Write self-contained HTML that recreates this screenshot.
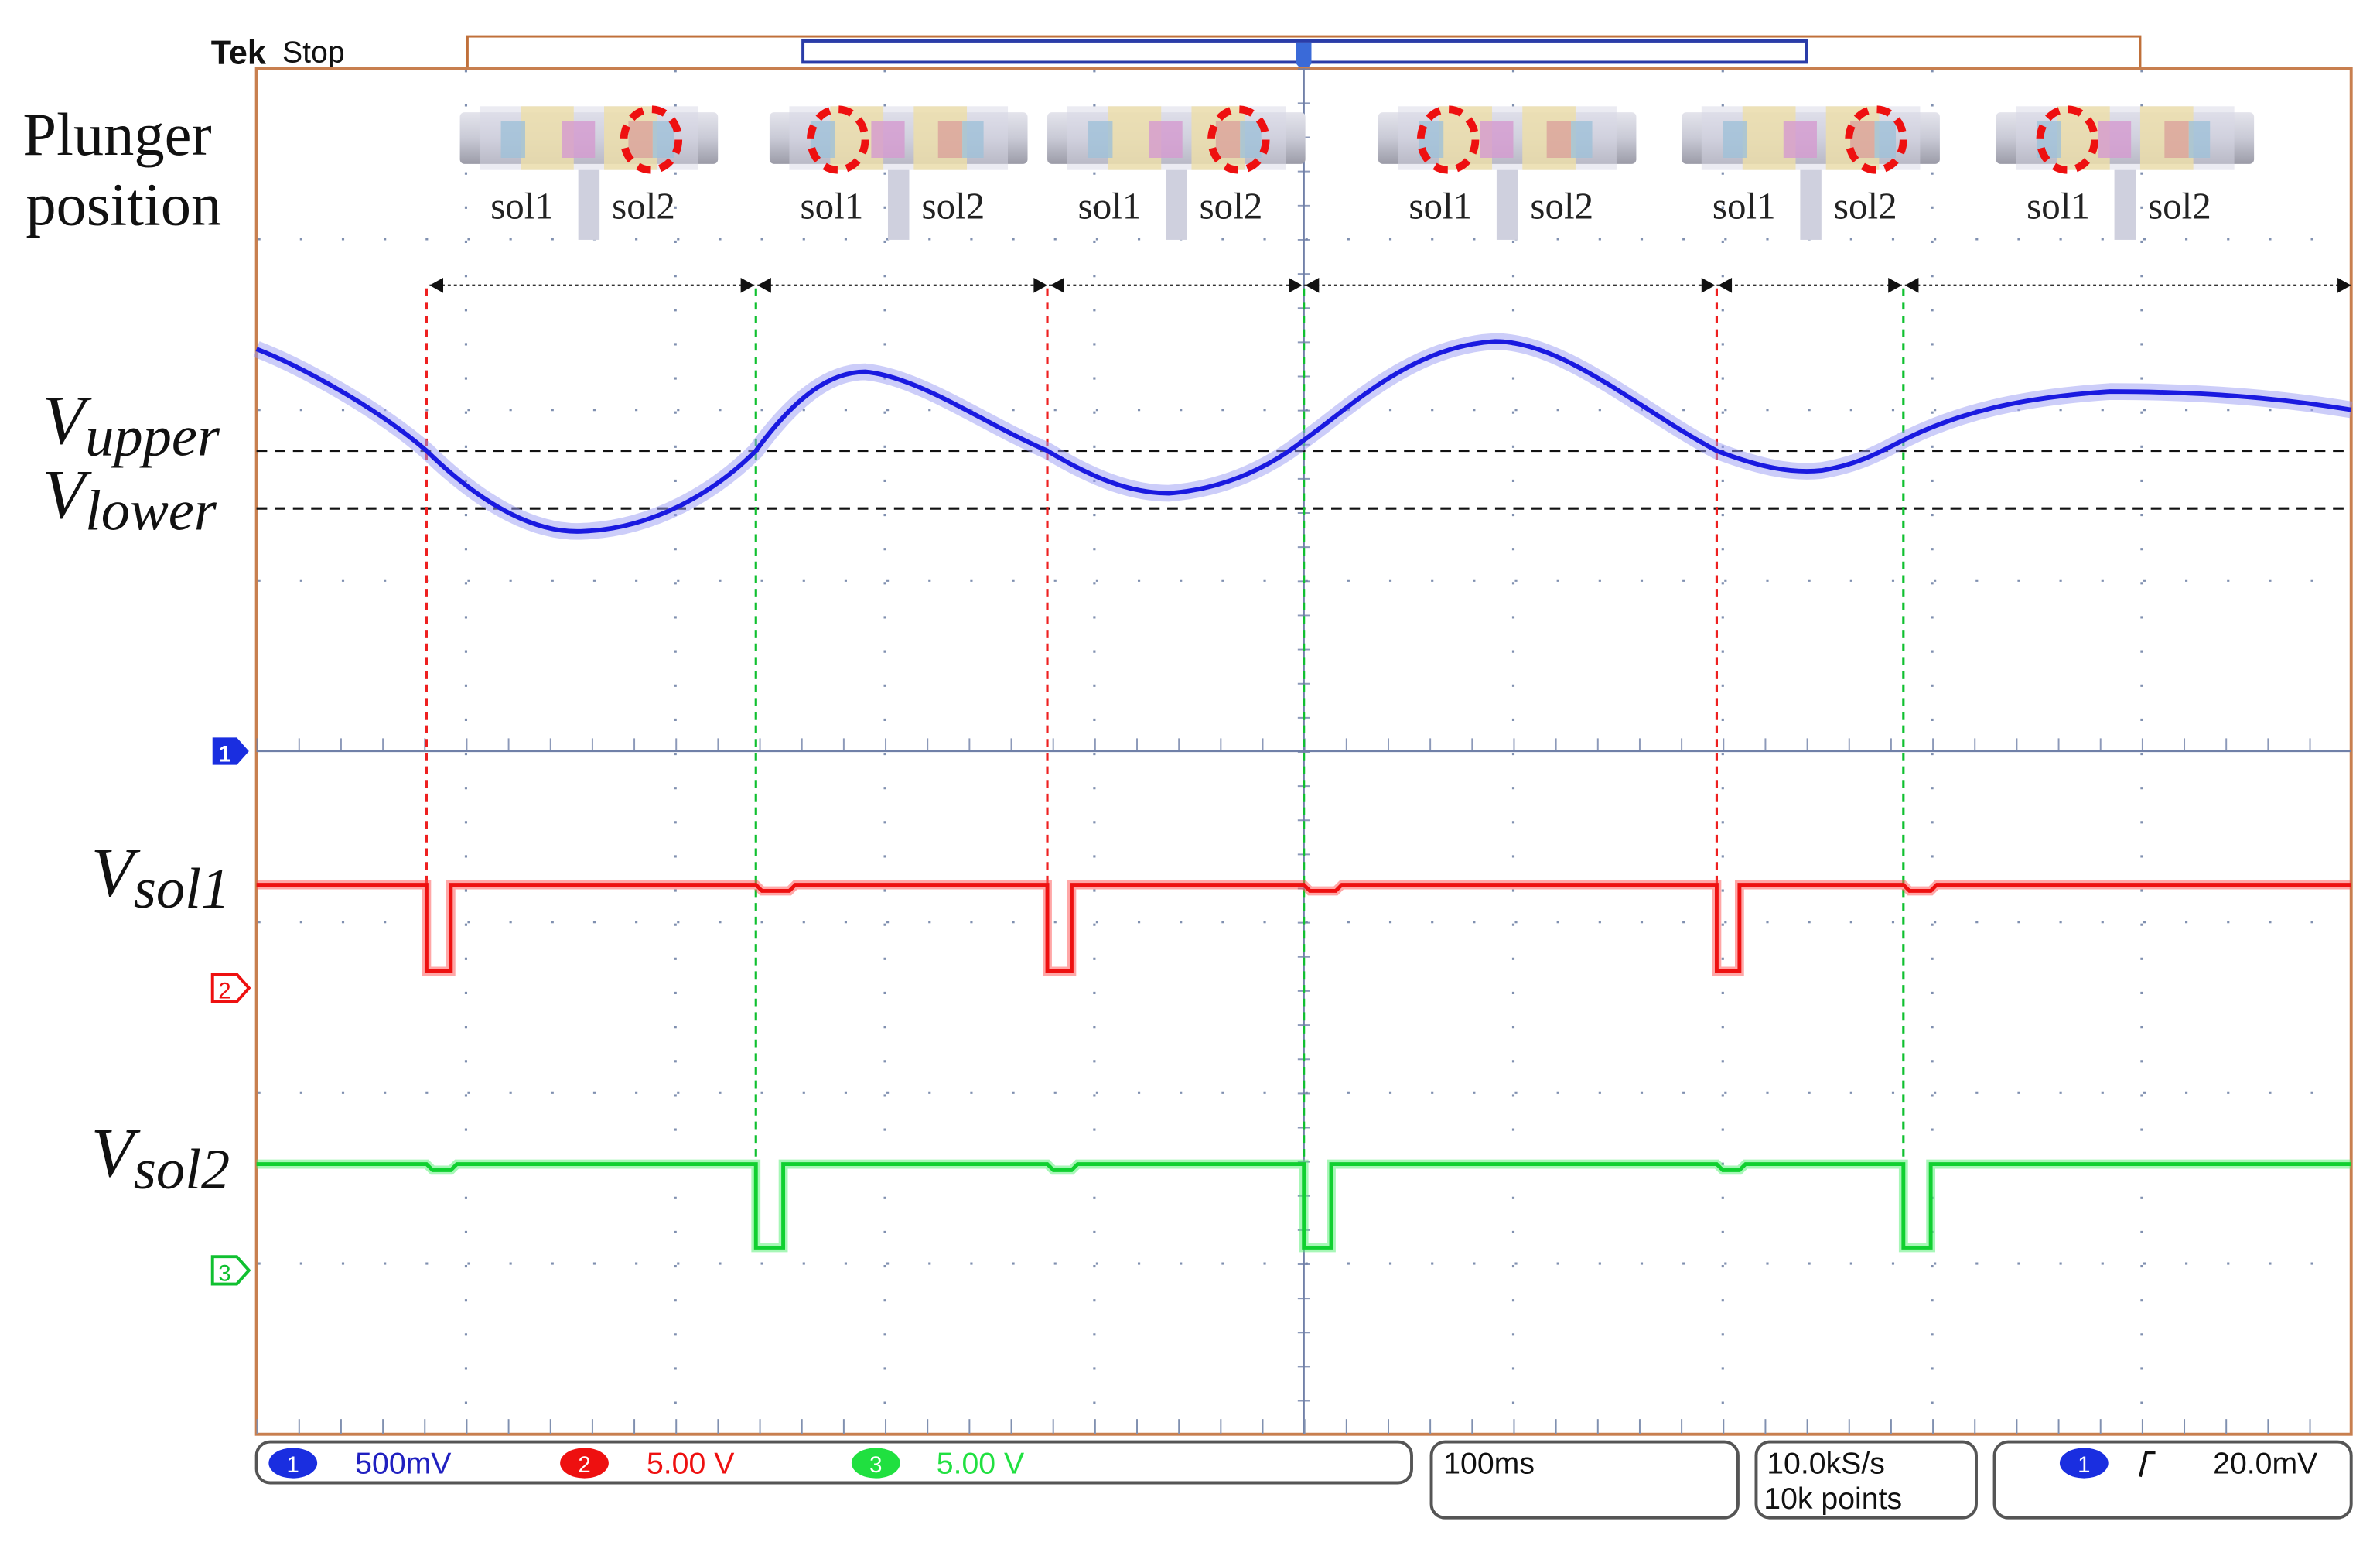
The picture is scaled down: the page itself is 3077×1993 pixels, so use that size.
<!DOCTYPE html>
<html><head><meta charset="utf-8"><style>
html,body{margin:0;padding:0;background:#fff}
svg{display:block}
</style></head><body>
<svg width="3077" height="1993" viewBox="0 0 1568 1016" preserveAspectRatio="none" xmlns="http://www.w3.org/2000/svg">
<defs>
<linearGradient id="cyl" x1="0" y1="0" x2="0" y2="1">
<stop offset="0" stop-color="#e4e4ec"/><stop offset="0.5" stop-color="#c9cad6"/><stop offset="1" stop-color="#9c9ca8"/>
</linearGradient>
<g id="sol">
<rect x="-85" y="-18" width="170" height="34" rx="3" fill="url(#cyl)"/>
<rect x="-72" y="-22" width="144" height="42" fill="#d8d8e6" opacity="0.5"/>
<rect x="-45" y="-22" width="35" height="42" fill="#eedfa8" opacity="0.8"/>
<rect x="10" y="-22" width="35" height="42" fill="#eedfa8" opacity="0.8"/>
<rect x="-58" y="-12" width="16" height="24" fill="#9fc0d8" opacity="0.8"/>
<rect x="-18" y="-12" width="22" height="24" fill="#d49ad0" opacity="0.8"/>
<rect x="26" y="-12" width="16" height="24" fill="#d89a98" opacity="0.7"/>
<rect x="42" y="-12" width="14" height="24" fill="#9fc0d8" opacity="0.8"/>
<rect x="-7" y="20" width="14" height="46" fill="#cfd0de"/>
<text x="-44" y="52" font-family="Liberation Serif, serif" font-size="25" fill="#222" text-anchor="middle">sol1</text>
<text x="36" y="52" font-family="Liberation Serif, serif" font-size="25" fill="#222" text-anchor="middle">sol2</text>
</g>
</defs>

<rect x="308" y="24" width="1102" height="21" fill="none" stroke="#c0703a" stroke-width="1.5"/>
<rect x="529" y="27" width="661" height="14" fill="none" stroke="#2a3ca8" stroke-width="2"/>
<path d="M854 28 h10 v14 l-5 6 l-5 -6 z" fill="#3a6ad8"/>
<text x="139" y="42" font-family="Liberation Sans, sans-serif" font-size="22" font-weight="bold" fill="#111">Tek</text>
<text x="186" y="41" font-family="Liberation Sans, sans-serif" font-size="20" fill="#111">Stop</text>

<rect x="169" y="45" width="1380" height="900" fill="#fff" stroke="#c87f4f" stroke-width="2"/>
<g stroke="#8090b0" stroke-width="1.6" stroke-dasharray="1.6 20.9">
<line x1="307" y1="46" x2="307" y2="944"/><line x1="445" y1="46" x2="445" y2="944"/>
<line x1="583" y1="46" x2="583" y2="944"/><line x1="721" y1="46" x2="721" y2="944"/>
<line x1="997" y1="46" x2="997" y2="944"/><line x1="1135" y1="46" x2="1135" y2="944"/>
<line x1="1273" y1="46" x2="1273" y2="944"/><line x1="1411" y1="46" x2="1411" y2="944"/>
</g>
<g stroke="#8090b0" stroke-width="1.6" stroke-dasharray="1.6 26">
<line x1="170" y1="157.5" x2="1548" y2="157.5"/><line x1="170" y1="270" x2="1548" y2="270"/>
<line x1="170" y1="382.5" x2="1548" y2="382.5"/><line x1="170" y1="607.5" x2="1548" y2="607.5"/>
<line x1="170" y1="720" x2="1548" y2="720"/><line x1="170" y1="832.5" x2="1548" y2="832.5"/>
</g>
<line x1="859" y1="45" x2="859" y2="945" stroke="#7080a8" stroke-width="1.2"/>
<line x1="169" y1="495" x2="1549" y2="495" stroke="#7080a8" stroke-width="1.2"/>
<line x1="169" y1="491" x2="1549" y2="491" stroke="#7080a8" stroke-width="9" stroke-dasharray="1 26.6" opacity="0.8"/>
<line x1="855" y1="45" x2="855" y2="945" stroke="#7080a8" stroke-width="8" stroke-dasharray="1 21.5" transform="translate(4 0)" opacity="0.8"/>
<line x1="169" y1="940" x2="1549" y2="940" stroke="#8090b0" stroke-width="10" stroke-dasharray="1 26.6"/>

<use href="#sol" x="388" y="92"/>
<use href="#sol" x="592" y="92"/>
<use href="#sol" x="775" y="92"/>
<use href="#sol" x="993" y="92"/>
<use href="#sol" x="1193" y="92"/>
<use href="#sol" x="1400" y="92"/>
<g fill="none" stroke="#ee1010" stroke-width="5" stroke-dasharray="9 6">
<ellipse cx="429" cy="92" rx="18" ry="20"/>
<ellipse cx="552" cy="92" rx="18" ry="20"/>
<ellipse cx="816" cy="92" rx="18" ry="20"/>
<ellipse cx="954" cy="92" rx="18" ry="20"/>
<ellipse cx="1236" cy="92" rx="18" ry="20"/>
<ellipse cx="1362" cy="92" rx="18" ry="20"/>
</g>

<g stroke="#333" stroke-width="1.2" stroke-dasharray="2 2" fill="none">
<line x1="283" y1="188" x2="1549" y2="188"/>
</g>
<g fill="#111">
<path d="M283 188 l9 -5 v10z"/><path d="M497 188 l-9 -5 v10z"/><path d="M499 188 l9 -5 v10z"/>
<path d="M690 188 l-9 -5 v10z"/><path d="M692 188 l9 -5 v10z"/><path d="M858 188 l-9 -5 v10z"/>
<path d="M860 188 l9 -5 v10z"/><path d="M1130 188 l-9 -5 v10z"/><path d="M1132 188 l9 -5 v10z"/>
<path d="M1253 188 l-9 -5 v10z"/><path d="M1255 188 l9 -5 v10z"/><path d="M1549 188 l-9 -5 v10z"/>
</g>

<g stroke="#111" stroke-width="1.6" stroke-dasharray="7 5">
<line x1="169" y1="297" x2="1549" y2="297"/><line x1="169" y1="335" x2="1549" y2="335"/>
</g>

<g stroke="#ee2020" stroke-width="1.6" stroke-dasharray="5 4">
<line x1="281" y1="190" x2="281" y2="640"/><line x1="690" y1="190" x2="690" y2="640"/><line x1="1131" y1="190" x2="1131" y2="640"/>
</g>
<g stroke="#10c030" stroke-width="1.6" stroke-dasharray="5 4">
<line x1="498" y1="190" x2="498" y2="822"/><line x1="859" y1="190" x2="859" y2="822"/><line x1="1254" y1="190" x2="1254" y2="822"/>
</g>

<path d="M169 230 C200 242 250 270 281 297 C320 335 355 352 385 350 C430 348 470 325 498 297 C525 260 548 245 570 245 C605 248 650 280 690 297 C720 315 745 325 770 325 C810 322 840 305 859 290 C890 268 930 228 985 225 C1030 225 1080 270 1131 297 C1160 308 1180 312 1200 310 C1225 306 1240 297 1254 290 C1290 272 1330 262 1390 258 C1450 258 1500 262 1549 270" fill="none" stroke="#9a9cf4" stroke-width="11" opacity="0.5"/>
<path d="M169 230 C200 242 250 270 281 297 C320 335 355 352 385 350 C430 348 470 325 498 297 C525 260 548 245 570 245 C605 248 650 280 690 297 C720 315 745 325 770 325 C810 322 840 305 859 290 C890 268 930 228 985 225 C1030 225 1080 270 1131 297 C1160 308 1180 312 1200 310 C1225 306 1240 297 1254 290 C1290 272 1330 262 1390 258 C1450 258 1500 262 1549 270" fill="none" stroke="#1a1ae0" stroke-width="3"/>

<path d="M169 583 H281 V640 H297 V583 H498 L502 587 H520 L524 583 H690 V640 H706 V583 H859 L863 587 H880 L884 583 H1131 V640 H1146 V583 H1254 L1258 587 H1272 L1276 583 H1549" fill="none" stroke="#ff5050" stroke-width="6" opacity="0.5"/>
<path d="M169 583 H281 V640 H297 V583 H498 L502 587 H520 L524 583 H690 V640 H706 V583 H859 L863 587 H880 L884 583 H1131 V640 H1146 V583 H1254 L1258 587 H1272 L1276 583 H1549" fill="none" stroke="#ee1010" stroke-width="2.5"/>
<path d="M169 767 H281 L285 771 H297 L301 767 H498 V822 H516 V767 H690 L694 771 H706 L710 767 H859 V822 H877 V767 H1131 L1135 771 H1146 L1150 767 H1254 V822 H1272 V767 H1549" fill="none" stroke="#50f070" stroke-width="6" opacity="0.5"/>
<path d="M169 767 H281 L285 771 H297 L301 767 H498 V822 H516 V767 H690 L694 771 H706 L710 767 H859 V822 H877 V767 H1131 L1135 771 H1146 L1150 767 H1254 V822 H1272 V767 H1549" fill="none" stroke="#10d030" stroke-width="2.5"/>

<path d="M140 486 h16 l8 9 l-8 9 h-16z" fill="#1a2ee0"/>
<text x="148" y="502" font-family="Liberation Sans, sans-serif" font-size="15" font-weight="bold" fill="#fff" text-anchor="middle">1</text>
<path d="M140 642 h16 l8 9 l-8 9 h-16z" fill="#fff" stroke="#ee1010" stroke-width="2"/>
<text x="148" y="658" font-family="Liberation Sans, sans-serif" font-size="15" fill="#ee1010" text-anchor="middle">2</text>
<path d="M140 828 h16 l8 9 l-8 9 h-16z" fill="#fff" stroke="#10c030" stroke-width="2"/>
<text x="148" y="844" font-family="Liberation Sans, sans-serif" font-size="15" fill="#10c030" text-anchor="middle">3</text>

<g font-family="Liberation Serif, serif" fill="#111">
<text x="15" y="102" font-size="40">Plunger</text>
<text x="17" y="148" font-size="40">position</text>
<text x="28" y="292" font-size="46" font-style="italic">V<tspan font-size="38" dy="8">upper</tspan></text>
<text x="28" y="341" font-size="46" font-style="italic">V<tspan font-size="38" dy="8">lower</tspan></text>
<text x="60" y="590" font-size="46" font-style="italic">V<tspan font-size="38" dy="8">sol1</tspan></text>
<text x="60" y="775" font-size="46" font-style="italic">V<tspan font-size="38" dy="8">sol2</tspan></text>
</g>

<g fill="#fff" stroke="#555" stroke-width="2">
<rect x="169" y="950" width="761" height="27" rx="9"/>
<rect x="943" y="950" width="202" height="50" rx="9"/>
<rect x="1157" y="950" width="145" height="50" rx="9"/>
<rect x="1314" y="950" width="235" height="50" rx="9"/>
</g>
<g font-family="Liberation Sans, sans-serif" font-size="20">
<ellipse cx="193" cy="964" rx="16" ry="10" fill="#1a2ee0"/><text x="193" y="970" font-size="15" fill="#fff" text-anchor="middle">1</text>
<text x="234" y="971" fill="#2020c0">500mV</text>
<ellipse cx="385" cy="964" rx="16" ry="10" fill="#ee1010"/><text x="385" y="970" font-size="15" fill="#fff" text-anchor="middle">2</text>
<text x="426" y="971" fill="#ee1010">5.00 V</text>
<ellipse cx="577" cy="964" rx="16" ry="10" fill="#20e040"/><text x="577" y="970" font-size="15" fill="#fff" text-anchor="middle">3</text>
<text x="617" y="971" fill="#20e040">5.00 V</text>
<text x="951" y="971" fill="#111">100ms</text>
<text x="1164" y="971" fill="#111">10.0kS/s</text>
<text x="1162" y="994" fill="#111">10k points</text>
<ellipse cx="1373" cy="964" rx="16" ry="10" fill="#1a2ee0"/><text x="1373" y="970" font-size="15" fill="#fff" text-anchor="middle">1</text>
<path d="M1410 973 l4 -16 l6 0" fill="none" stroke="#111" stroke-width="2"/>
<text x="1458" y="971" fill="#111">20.0mV</text>
</g>
</svg>
</body></html>
